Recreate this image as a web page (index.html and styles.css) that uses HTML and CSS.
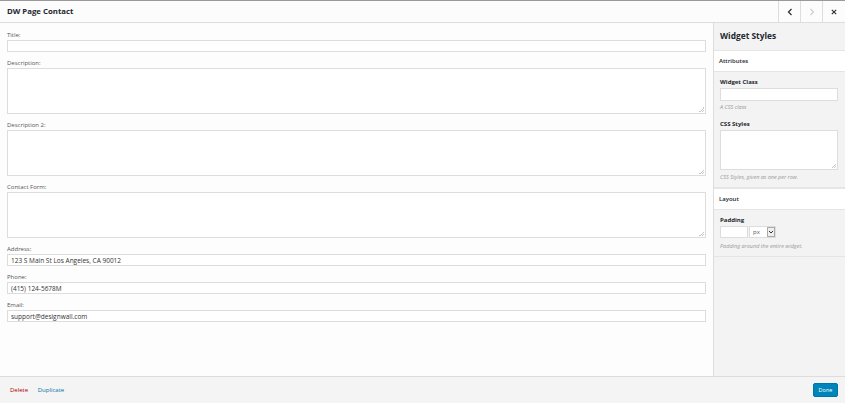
FILE: index.html
```html
<!DOCTYPE html>
<html lang="en">
<head>
  <meta charset="UTF-8">
  <meta name="viewport" content="width=device-width, initial-scale=1.0">
  <title>DW Page Contact</title>
  <link rel="stylesheet" href="styles.css">
</head>
<body>
  <div class="modal">
    <header class="modal-header">
      <h1>DW Page Contact</h1>
      <div class="nav">
        <button class="nav-btn" type="button">
          <svg width="8" height="8" viewBox="0 0 8 8"><path d="M5.5 1 L2.5 4 L5.5 7" fill="none" stroke="#333" stroke-width="1.3"/></svg>
        </button>
        <button class="nav-btn" type="button">
          <svg width="8" height="8" viewBox="0 0 8 8"><path d="M2.5 1 L5.5 4 L2.5 7" fill="none" stroke="#ccc" stroke-width="1.1"/></svg>
        </button>
        <button class="nav-btn" type="button">
          <svg width="8" height="8" viewBox="0 0 8 8"><path d="M1.8 1.8 L6.2 6.2 M6.2 1.8 L1.8 6.2" fill="none" stroke="#333" stroke-width="1.2"/></svg>
        </button>
      </div>
    </header>

    <div class="modal-body">
      <form class="main">
        <div class="field">
          <label for="title">Title:</label>
          <input type="text" id="title">
        </div>
        <div class="field">
          <label for="desc">Description:</label>
          <textarea id="desc"></textarea>
        </div>
        <div class="field">
          <label for="desc2">Description 2:</label>
          <textarea id="desc2"></textarea>
        </div>
        <div class="field">
          <label for="contact">Contact Form:</label>
          <textarea id="contact"></textarea>
        </div>
        <div class="field">
          <label for="address">Address:</label>
          <input type="text" id="address" value="123 S Main St Los Angeles, CA 90012">
        </div>
        <div class="field">
          <label for="phone">Phone:</label>
          <input type="text" id="phone" value="(415) 124-5678M">
        </div>
        <div class="field">
          <label for="email">Email:</label>
          <input type="text" id="email" value="support@designwall.com">
        </div>
      </form>

      <aside class="sidebar">
        <h2>Widget Styles</h2>

        <div class="section-title">Attributes</div>
        <div class="section">
          <label class="side-label" for="wclass">Widget Class</label>
          <input type="text" id="wclass" class="side-input">
          <p class="hint">A CSS class</p>

          <label class="side-label" for="wcss">CSS Styles</label>
          <textarea id="wcss" class="side-textarea"></textarea>
          <p class="hint">CSS Styles, given as one per row.</p>
        </div>

        <div class="section-title">Layout</div>
        <div class="section">
          <label class="side-label" for="padding">Padding</label>
          <div class="padding-row">
            <input type="text" id="padding" class="pad-input">
            <div class="unit">
              <span>px</span>
              <span class="arrow">
                <svg width="6" height="6" viewBox="0 0 6 6"><path d="M1 2 L3 4 L5 2" fill="none" stroke="#333" stroke-width="1"/></svg>
              </span>
            </div>
          </div>
          <p class="hint">Padding around the entire widget.</p>
        </div>
      </aside>
    </div>

    <footer class="modal-footer">
      <div class="links">
        <a href="#" class="delete">Delete</a>
        <a href="#" class="duplicate">Duplicate</a>
      </div>
      <button type="button" class="done">Done</button>
    </footer>
  </div>
</body>
</html>
```

FILE: styles.css
```css
* {
  box-sizing: border-box;
}
body {
  margin: 0;
  font-family: "Open Sans", Arial, sans-serif;
  color: #444;
  background: #fcfcfc;
}
.modal {
  height: 403px;
  display: flex;
  flex-direction: column;
  border-top: 1px solid #999;
}
.modal-header {
  height: 22px;
  display: flex;
  justify-content: space-between;
  align-items: stretch;
  background: #fcfcfc;
  border-bottom: 1px solid #ddd;
}
.modal-header h1 {
  margin: 0;
  padding-left: 7px;
  font-size: 7.8px;
  font-weight: 700;
  line-height: 21px;
  color: #23282d;
}
.nav {
  display: flex;
}
.nav-btn {
  width: 22px;
  border: none;
  border-left: 1px solid #ddd;
  background: transparent;
  padding: 0;
  display: flex;
  align-items: center;
  justify-content: center;
}
.nav-btn:last-child {
  width: 23px;
}
.modal-body {
  flex: 1;
  display: flex;
  min-height: 0;
}
.main {
  flex: 1;
  margin: 0;
  padding: 8px 7px 0;
  background: #fdfdfd;
}
.field {
  margin-bottom: 7px;
}
.field label {
  display: block;
  font-size: 6px;
  line-height: 8px;
  margin-bottom: 1px;
  color: #555;
}
.field input,
.field textarea {
  display: block;
  width: 100%;
  border: 1px solid #ddd;
  background: #fff;
  font-family: inherit;
  font-size: 6.5px;
  color: #333;
  padding: 0 3px;
  margin: 0;
  outline: none;
}
.field input {
  height: 12px;
}
.field textarea {
  height: 46px;
}
textarea::-webkit-resizer {
  background: linear-gradient(135deg, transparent 50%, #c8c8c8 50%, #c8c8c8 62%, transparent 62%, transparent 75%, #c8c8c8 75%, #c8c8c8 87%, transparent 87%) right 1px bottom 1px / 5px 5px no-repeat;
}
.sidebar {
  width: 132px;
  background: #f3f3f3;
  border-left: 1px solid #ddd;
}
.sidebar h2 {
  margin: 0;
  height: 27px;
  padding-left: 6px;
  font-size: 8.4px;
  font-weight: 700;
  line-height: 26px;
  color: #23282d;
}
.section-title {
  background: #fff;
  border-top: 1px solid #e5e5e5;
  border-bottom: 1px solid #e5e5e5;
  height: 22px;
  line-height: 20px;
  padding-left: 5px;
  font-size: 6px;
  font-weight: 600;
  color: #23282d;
}
.section {
  padding: 6px 7px 0 6px;
  border-bottom: 1px solid #e5e5e5;
}
.side-label {
  display: block;
  font-size: 6px;
  font-weight: 700;
  line-height: 8px;
  margin-bottom: 2px;
  color: #23282d;
}
.side-input,
.side-textarea {
  display: block;
  width: 100%;
  border: 1px solid #ddd;
  background: #fff;
  margin: 0;
  outline: none;
}
.side-input {
  height: 13px;
}
.side-textarea {
  height: 40px;
}
.hint {
  margin: 2px 0 9px;
  font-size: 5.5px;
  font-style: italic;
  line-height: 8px;
  color: #999;
}
.side-textarea + .hint {
  margin-top: 3px;
  margin-bottom: 6px;
}
.padding-row + .hint {
  margin-top: 4px;
  margin-bottom: 6px;
}
.padding-row {
  display: flex;
  gap: 1px;
}
.pad-input {
  width: 28px;
  height: 12px;
  border: 1px solid #ddd;
  background: #fff;
  margin: 0;
}
.unit {
  width: 27px;
  height: 12px;
  border: 1px solid #ddd;
  background: #fff;
  display: flex;
  align-items: center;
  justify-content: space-between;
  padding-left: 3px;
  font-size: 6px;
  color: #555;
}
.arrow {
  width: 8px;
  height: 10px;
  border: 1px solid #aaa;
  background: #eee;
  display: flex;
  align-items: center;
  justify-content: center;
}
.modal-footer {
  height: 27px;
  border-top: 1px solid #ddd;
  background: #f4f4f4;
  display: flex;
  align-items: center;
  justify-content: space-between;
  padding: 0 7px 0 10px;
}
.links {
  font-size: 6px;
  line-height: 8px;
  margin-bottom: 1px;
}
.links a {
  text-decoration: none;
  margin-right: 8px;
}
.delete {
  color: #a00;
}
.duplicate {
  color: #0073aa;
}
.done {
  height: 14px;
  width: 25px;
  padding: 0;
  margin-bottom: 1px;
  background: #0085ba;
  border: 1px solid #0073aa;
  border-radius: 2px;
  color: #fff;
  font-family: inherit;
  font-size: 5.5px;
}
```
